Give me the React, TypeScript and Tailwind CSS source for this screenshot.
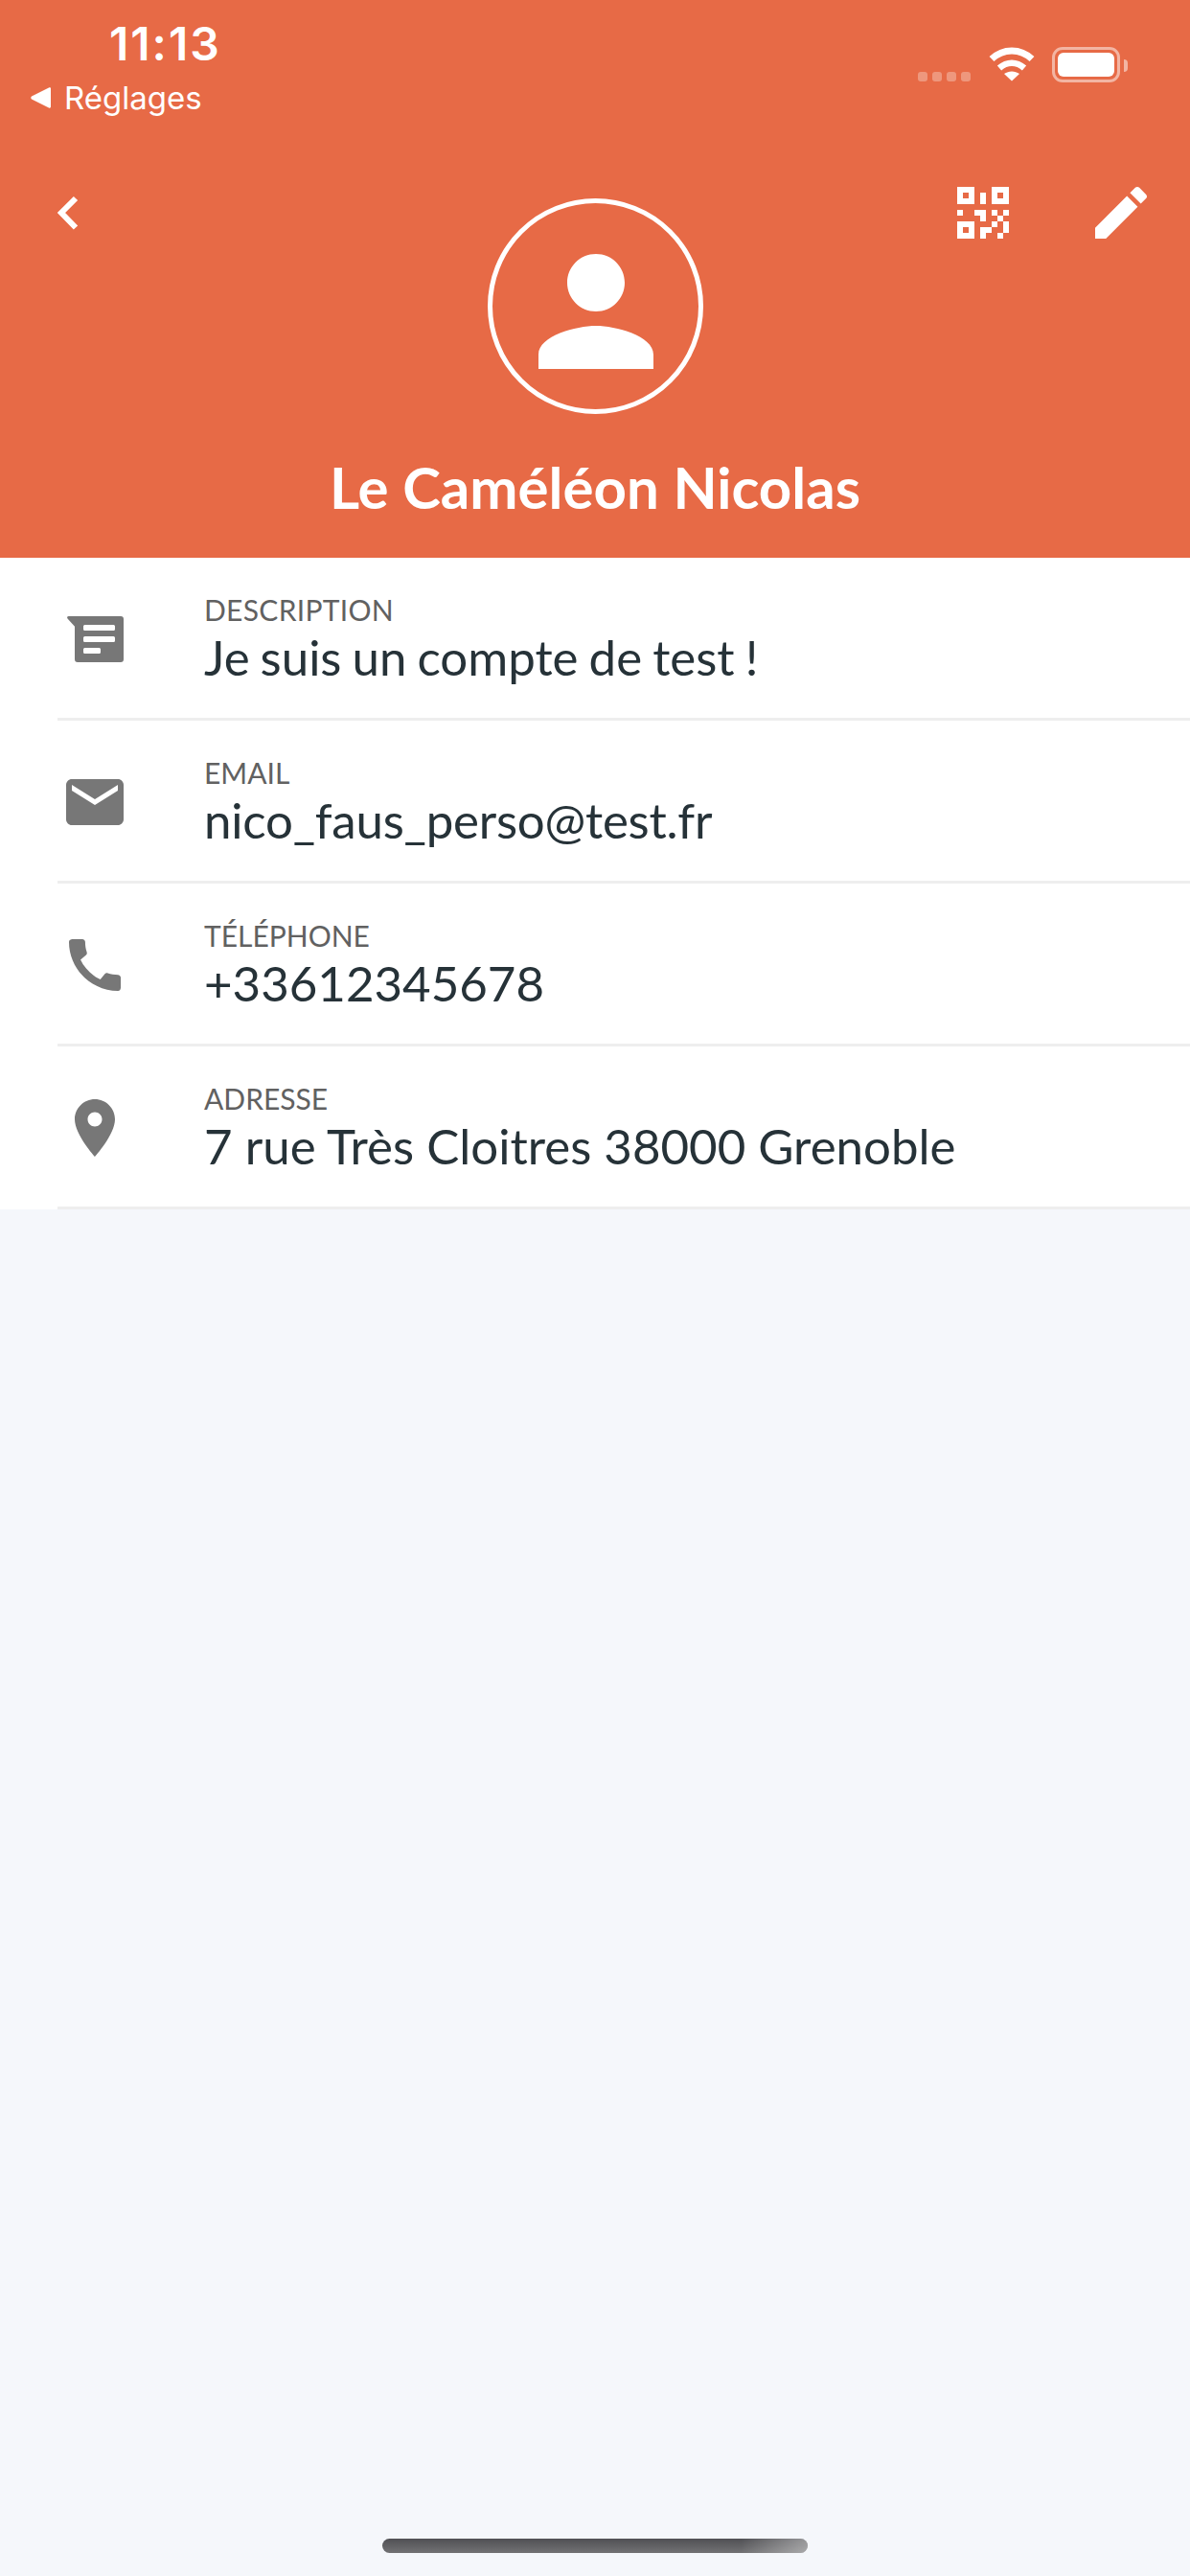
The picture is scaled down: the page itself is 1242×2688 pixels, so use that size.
import React from 'react';

const qrCells = [
  [4, 1], [4, 2],
  [0, 4], [3, 4], [4, 4], [6, 4], [8, 4],
  [4, 5], [7, 5],
  [6, 6], [8, 6],
  [4, 7], [5, 7], [8, 7],
  [4, 8], [7, 8],
];

function QrIcon() {
  return (
    <svg width="54" height="54" viewBox="0 0 9 9" fill="white" shapeRendering="crispEdges">
      <path fillRule="evenodd" d="M0 0h3v3H0zM1 1v1h1V1zM6 0h3v3H6zM7 1v1h1V1zM0 6h3v3H0zM1 7v1h1V7z" />
      {qrCells.map(([x, y]) => (
        <rect key={`${x}-${y}`} x={x} y={y} width="1" height="1" />
      ))}
    </svg>
  );
}

function Icon({ d }: { d: string }) {
  return (
    <svg width="72" height="72" viewBox="0 0 24 24" fill="#777777" fillRule="evenodd" className="shrink-0">
      <path d={d} />
    </svg>
  );
}

const rows = [
  {
    label: 'DESCRIPTION',
    labelClass: 'tracking-[0.3px]',
    value: 'Je suis un compte de test !',
    valueClass: '[word-spacing:-2px]',
    icon: 'M2.9 4H21a1 1 0 0 1 1 1v14a1 1 0 0 1-1 1H6a1 1 0 0 1-1-1V7.600L2.500 4.800C2.200 4.400 2.400 4 2.900 4zM8.500 7a.5.5 0 0 0-.5.5v1a.5.5 0 0 0 .5.5h10a.5.5 0 0 0 .5-.5v-1a.5.5 0 0 0-.5-.5zM8.500 11a.5.5 0 0 0-.5.5v1a.5.5 0 0 0 .5.5h10a.5.5 0 0 0 .5-.5v-1a.5.5 0 0 0-.5-.5zM8.500 15a.5.5 0 0 0-.5.5v1a.5.5 0 0 0 .5.5h5a.5.5 0 0 0 .5-.5v-1a.5.5 0 0 0-.5-.5z',
  },
  {
    label: 'EMAIL',
    labelClass: '',
    value: 'nico_faus_perso@test.fr',
    valueClass: 'tracking-[-0.22px]',
    icon: 'M20 4H4c-1.1 0-1.99.9-1.99 2L2 18c0 1.1.9 2 2 2h16c1.1 0 2-.9 2-2V6c0-1.1-.9-2-2-2zm0 4l-8 5-8-5V6l8 5 8-5v2z',
  },
  {
    label: 'TÉLÉPHONE',
    labelClass: '',
    value: '+33612345678',
    valueClass: '',
    icon: 'M20.01 15.38c-1.23 0-2.42-.2-3.53-.56-.35-.12-.74-.03-1.01.24l-1.57 1.97c-2.83-1.35-5.48-3.9-6.89-6.83l1.95-1.66c.27-.28.35-.67.24-1.02-.37-1.11-.56-2.3-.56-3.53 0-.54-.45-.99-.99-.99H4.19C3.65 3 3 3.24 3 3.99 3 13.28 10.73 21 20.01 21c.71 0 .99-.63.99-1.18v-3.45c0-.54-.45-.99-.99-.99z',
  },
  {
    label: 'ADRESSE',
    labelClass: '',
    value: '7 rue Très Cloitres 38000 Grenoble',
    valueClass: '',
    icon: 'M12 2C8.13 2 5 5.13 5 9c0 5.25 7 13 7 13s7-7.75 7-13c0-3.87-3.13-7-7-7zm0 9.5c-1.38 0-2.5-1.12-2.5-2.5s1.12-2.5 2.5-2.5 2.5 1.12 2.5 2.5-1.12 2.5-2.5 2.5z',
  },
];

export default function App() {
  return (
    <div className="relative flex h-[2688px] w-[1242px] flex-col overflow-hidden bg-[#f5f7fb] font-['Lato','Noto_Sans',sans-serif]">
      {/* Header */}
      <header className="flex h-[582px] shrink-0 flex-col bg-[#e76a46] text-white">
        {/* Status bar */}
        <div className="flex h-[186px] shrink-0 justify-between pl-[32px] pr-[65px] font-['Inter',sans-serif]">
          <div className="flex flex-col">
            <span className="ml-[82px] mt-[18px] text-[48px] leading-[56px] font-semibold tracking-[2px]">11:13</span>
            <div className="mt-[9px] flex items-center gap-[14px]">
              <svg width="21" height="22" viewBox="0 0 21 22" fill="white">
                <path d="M21 1.500v19c0 1-1 1.500-2 1L1 12.500c-1-.7-1-2.300 0-3l18-9c1-.5 2-.1 2 1z" />
              </svg>
              <span className="text-[33px] leading-[38px]">Réglages</span>
            </div>
          </div>
          <div className="flex h-[40px] items-start pt-[49px]">
            <div className="mt-[26px] flex gap-[5px]">
              {[0, 1, 2, 3].map((i) => (
                <span key={i} className="h-[10px] w-[10px] rounded-[3px] bg-white/30" />
              ))}
            </div>
            <svg width="48" height="36" viewBox="0 0 48 36" className="ml-[19px]">
              <path d="M3 12.500C15 1 33 1 45 12.500" fill="none" stroke="white" strokeWidth="7" />
              <path d="M11 22c8-7 18-7 26 0" fill="none" stroke="white" strokeWidth="6.500" />
              <path d="M24 35.500L16 28c5-3.500 11-3.500 16 0z" fill="white" />
            </svg>
            <div className="ml-[18px] flex h-[37px] w-[71px] shrink-0 rounded-[11px] border-[3px] border-white/50 p-[3px]">
              <div className="flex-1 rounded-[6px] bg-white" />
            </div>
            <span className="ml-[4px] mt-[13px] h-[13px] w-[4px] rounded-r-full bg-white/50" />
          </div>
        </div>

        {/* Nav */}
        <div className="flex h-[72px] shrink-0 items-center pl-[54px] pr-[36px]">
          <svg width="36" height="48" viewBox="0 0 36 48" fill="none">
            <path d="M25 9L10 24l15 15.500" stroke="white" strokeWidth="6" />
          </svg>
          <div className="ml-auto mr-[81px] flex h-[54px] w-[54px] items-center">
            <QrIcon />
          </div>
          <svg width="72" height="72" viewBox="0 0 24 24" fill="white">
            <path d="M3 17.250V21h3.750L17.810 9.940l-3.750-3.750L3 17.250zM20.710 7.040c.390-.390.390-1.020 0-1.410l-2.340-2.340c-.390-.390-1.020-.390-1.410 0l-1.830 1.830 3.750 3.750 1.830-1.830z" />
          </svg>
        </div>

        {/* Avatar */}
        <div className="mx-auto -mt-[51px] flex h-[225px] w-[225px] shrink-0 items-start justify-center rounded-full border-[5px] border-white pl-[1px] pt-[23px]">
          <svg width="180" height="180" viewBox="0 0 24 24" fill="white">
            <path d="M12 12c2.210 0 4-1.790 4-4s-1.790-4-4-4-4 1.790-4 4 1.790 4 4 4zm0 2c-2.670 0-8 1.340-8 4v2h16v-2c0-2.660-5.330-4-8-4z" />
          </svg>
        </div>

        <h1 className="mt-[40px] text-center text-[60px] leading-[72px] font-bold">Le Caméléon Nicolas</h1>
      </header>

      {/* Details */}
      <ul className="bg-white pl-[60px]">
        {rows.map((row) => (
          <li key={row.label} className="flex h-[170px] border-b-[3px] border-[#eeeeee]">
            <div className="ml-[3px] pt-[49px]">
              <Icon d={row.icon} />
            </div>
            <div className="ml-[78px] pt-[36px]">
              <p className={`text-[30px] leading-[36px] text-[#616161] ${row.labelClass}`}>{row.label}</p>
              <p className={`mt-[2px] text-[51px] leading-[60px] text-[#263238] ${row.valueClass}`}>{row.value}</p>
            </div>
          </li>
        ))}
      </ul>

      {/* Home indicator */}
      <div className="absolute bottom-[24px] left-[399px] h-[15px] w-[444px] overflow-hidden rounded-full bg-gradient-to-b from-[#505054] to-[#727274]">
        <div className="absolute inset-y-0 right-0 w-[70px] bg-gradient-to-r from-transparent to-white/40" />
      </div>
    </div>
  );
}
